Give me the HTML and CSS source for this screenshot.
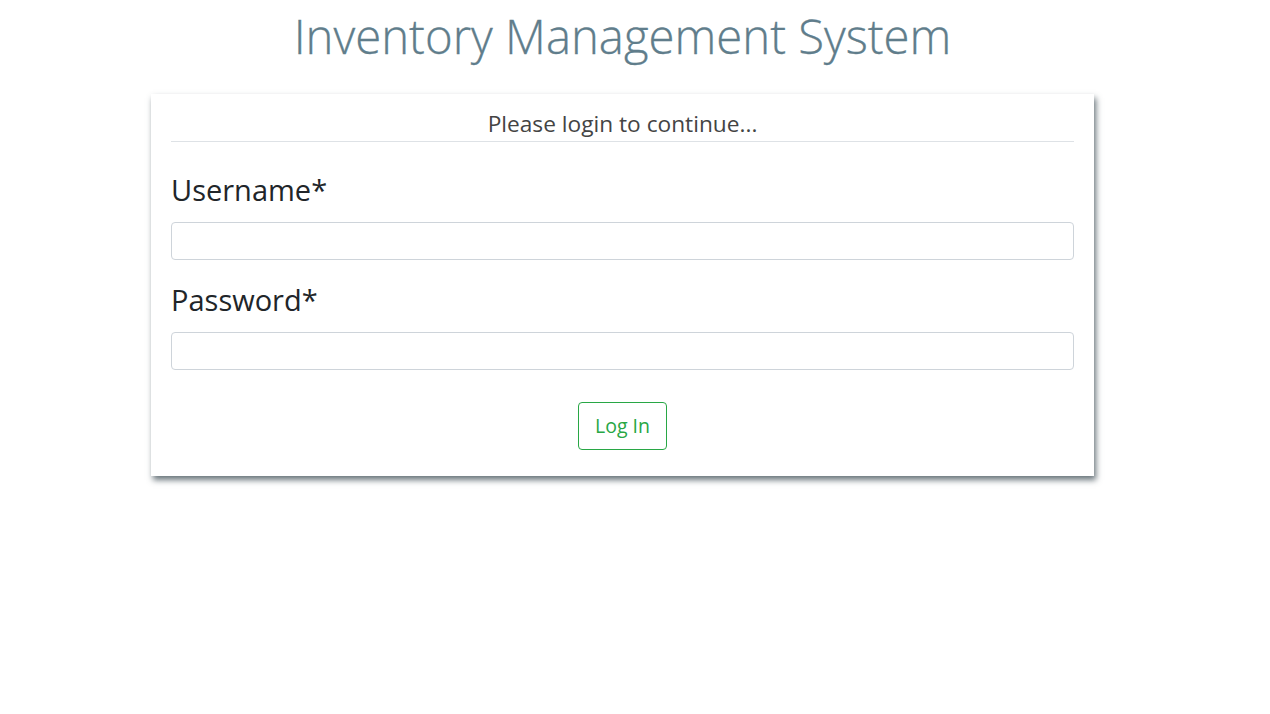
FILE: index.html
```html
<!DOCTYPE html>
<html lang="en">
<head>
<meta charset="utf-8">
<title>Inventory Management System</title>
<link rel="stylesheet" href="styles.css">
</head>
<body>
<div class="page">
  <h1 class="app-title">Inventory Management System</h1>
  <div class="card">
    <div class="card-head">Please login to continue...</div>
    <form class="login-form">
      <div class="form-group">
        <label class="form-label" for="username">Username*</label>
        <input class="form-control" id="username" type="text">
      </div>
      <div class="form-group">
        <label class="form-label" for="password">Password*</label>
        <input class="form-control" id="password" type="password">
      </div>
      <div class="actions">
        <button class="btn-login" type="button">Log In</button>
      </div>
    </form>
  </div>
</div>
</body>
</html>
```

FILE: styles.css
```css
* { box-sizing: border-box; }
html, body { margin: 0; padding: 0; background: #fff; }
body {
  font-family: "Open Sans", "Noto Sans", "Liberation Sans", sans-serif;
  color: #212529;
}
.page {
  width: 1245px;
  display: flex;
  flex-direction: column;
  align-items: center;
  padding-bottom: 200px;
}
.app-title {
  margin: 8px 0 29px;
  font-size: 47.3px;
  font-weight: 300;
  line-height: 1.2;
  color: #607d8b;
  -webkit-text-stroke: 0.3px #607d8b;
}
.card {
  width: 943px;
  background: #fff;
  padding: 16px 20px 26px;
  box-shadow: 2px 4px 6px rgba(55, 71, 79, 0.75);
}
.card-head {
  text-align: center;
  font-size: 22.7px;
  line-height: 1.2;
  color: #444;
  padding-bottom: 4px;
  border-bottom: 1px solid #dee2e6;
}
.login-form {
  padding-top: 24px;
}
.form-group {
  display: flex;
  flex-direction: column;
  margin-bottom: 16px;
}
.form-label {
  font-size: 29px;
  line-height: 48px;
  margin-bottom: 8px;
}
.form-control {
  height: 38px;
  border: 1px solid #ced4da;
  border-radius: 4px;
  padding: 6px 12px;
  font-size: 16px;
  font-family: inherit;
}
.actions {
  display: flex;
  justify-content: center;
  padding-top: 16px;
}
.btn-login {
  height: 48px;
  padding: 0 16.5px;
  border: 1px solid #28a745;
  border-radius: 4px;
  background: #fff;
  color: #28a745;
  font-family: inherit;
  font-size: 19.5px;
}
```
